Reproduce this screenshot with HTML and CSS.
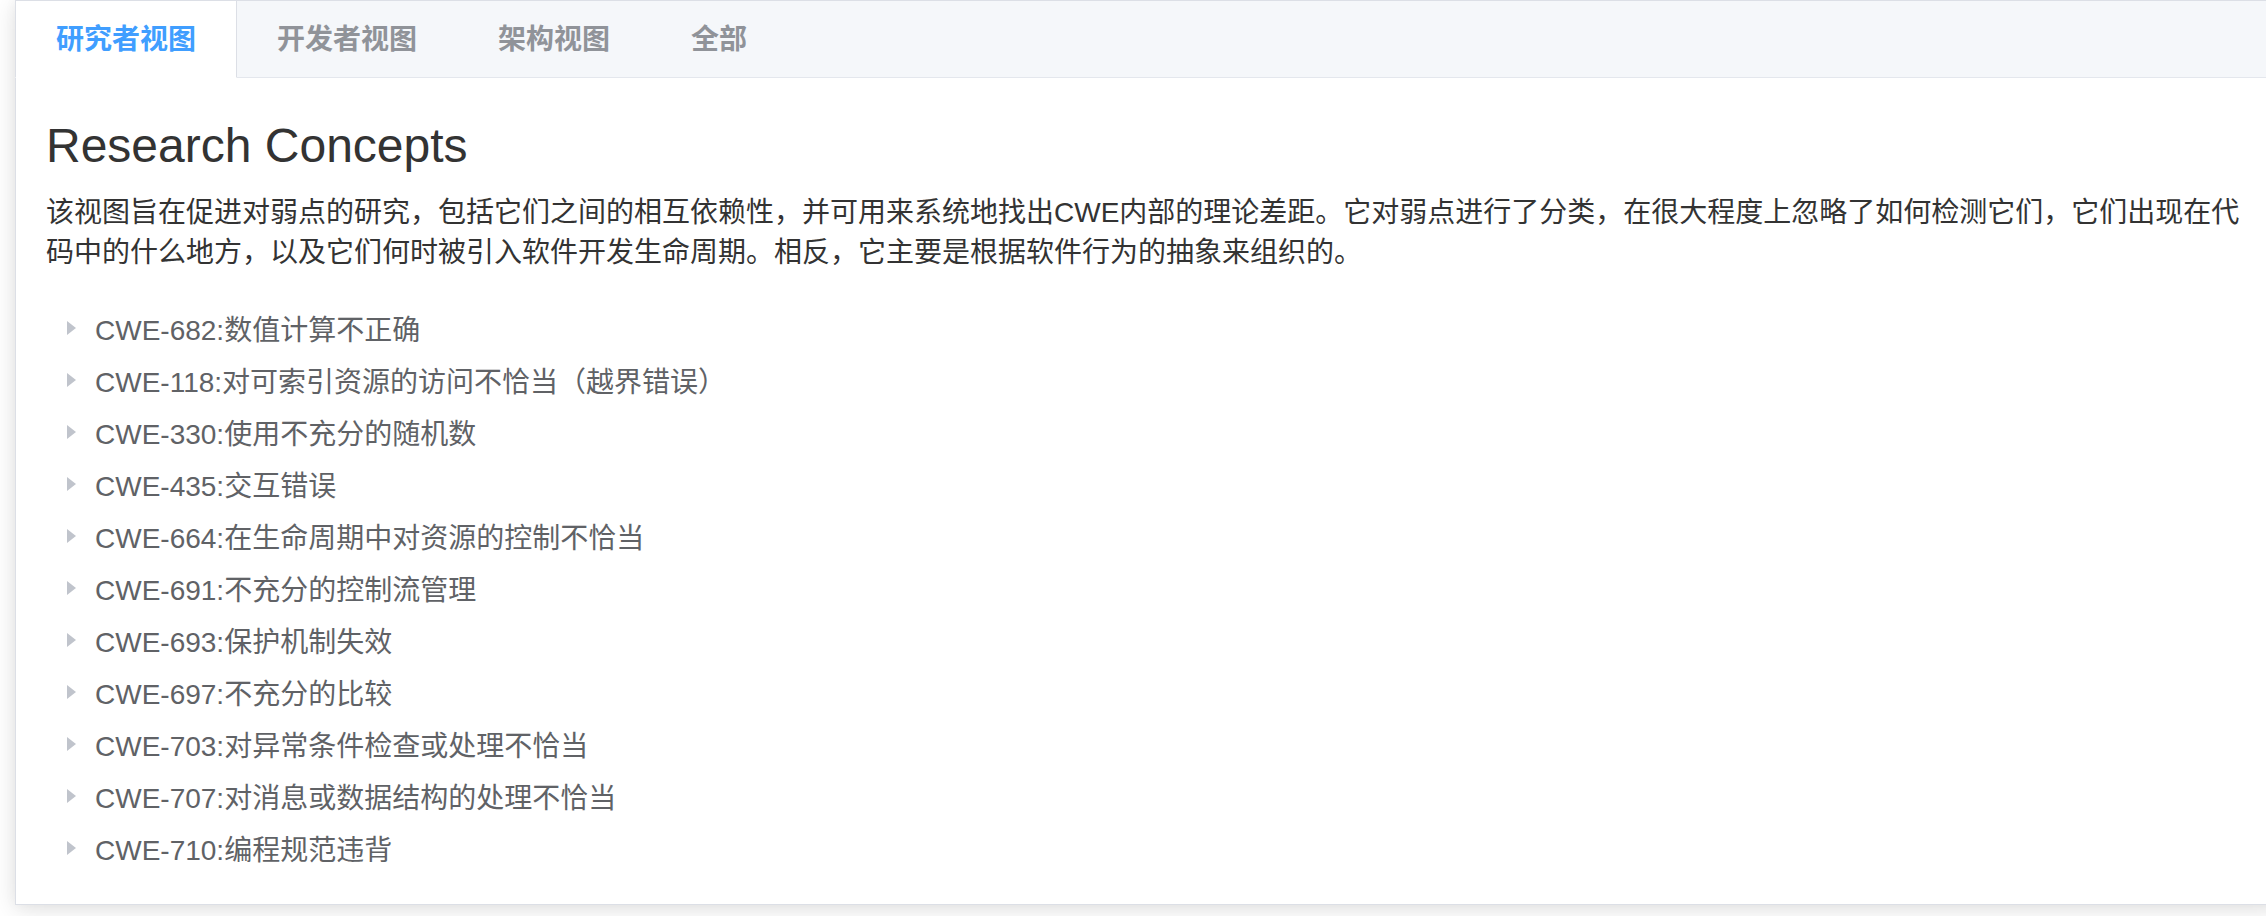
FILE: index.html
```html
<html>
  <head>
    <meta charset="utf-8">
    <title>CWE 视图</title>
    <link rel="stylesheet" href="styles.css">
  </head>
  <body>
    <div class="tabs-card">
      <div class="tabs-header">
        <div class="tab-item active">研究者视图</div>
        <div class="tab-item">开发者视图</div>
        <div class="tab-item">架构视图</div>
        <div class="tab-item">全部</div>
      </div>

      <div class="tabs-content">
        <h3 class="view-title">Research Concepts</h3>
        <p class="view-desc">该视图旨在促进对弱点的研究，包括它们之间的相互依赖性，并可用来系统地找出CWE内部的理论差距。它对弱点进行了分类，在很大程度上忽略了如何检测它们，它们出现在代码中的什么地方，以及它们何时被引入软件开发生命周期。相反，它主要是根据软件行为的抽象来组织的。</p>

        <ul class="tree">
          <li class="tree-node"><span class="caret"></span><span class="node-label">CWE-682:数值计算不正确</span></li>
          <li class="tree-node"><span class="caret"></span><span class="node-label">CWE-118:对可索引资源的访问不恰当（越界错误）</span></li>
          <li class="tree-node"><span class="caret"></span><span class="node-label">CWE-330:使用不充分的随机数</span></li>
          <li class="tree-node"><span class="caret"></span><span class="node-label">CWE-435:交互错误</span></li>
          <li class="tree-node"><span class="caret"></span><span class="node-label">CWE-664:在生命周期中对资源的控制不恰当</span></li>
          <li class="tree-node"><span class="caret"></span><span class="node-label">CWE-691:不充分的控制流管理</span></li>
          <li class="tree-node"><span class="caret"></span><span class="node-label">CWE-693:保护机制失效</span></li>
          <li class="tree-node"><span class="caret"></span><span class="node-label">CWE-697:不充分的比较</span></li>
          <li class="tree-node"><span class="caret"></span><span class="node-label">CWE-703:对异常条件检查或处理不恰当</span></li>
          <li class="tree-node"><span class="caret"></span><span class="node-label">CWE-707:对消息或数据结构的处理不恰当</span></li>
          <li class="tree-node"><span class="caret"></span><span class="node-label">CWE-710:编程规范违背</span></li>
        </ul>
      </div>
    </div>
  </body>
</html>
```

FILE: styles.css
```css
html, body {
  margin: 0;
  overflow: hidden;
  background: #fff;
}
body {
  font-family: "Liberation Sans", "Noto Sans CJK SC", sans-serif;
  color: #333;
}
.tabs-card {
  margin: 0 -16px 0 15px;
  background: #fff;
  border: 1px solid #DCDFE6;
  box-shadow: 0 4px 24px 0 rgba(0, 0, 0, .12), 0 0 12px 0 rgba(0, 0, 0, .04);
}
.tabs-header {
  display: flex;
  align-items: flex-start;
  height: 77px;
  box-sizing: border-box;
  background: #F5F7FA;
  border-bottom: 1px solid #E4E7ED;
}
.tab-item {
  height: 77px;
  margin-bottom: -1px;
  margin-left: -1px;
  padding: 0 40px;
  box-sizing: border-box;
  border: 1px solid transparent;
  border-top: 0;
  line-height: 77px;
  font-size: 28px;
  font-weight: 600;
  color: #909399;
}
.tab-item.active {
  color: #409EFF;
  background: #fff;
  border-left-color: #DCDFE6;
  border-right-color: #DCDFE6;
}
.tabs-content {
  padding: 30px;
}
.view-title {
  margin: 12px 0 20px;
  font-size: 48px;
  font-weight: normal;
  line-height: 1.1;
  color: #333;
}
.view-desc {
  margin: 0 0 29px;
  font-size: 28px;
  line-height: 40px;
  color: #333;
}
.tree {
  list-style: none;
  margin: 0;
  padding: 0;
}
.tree-node {
  display: flex;
  align-items: center;
  height: 52px;
  font-size: 28px;
  color: #606266;
}
.caret {
  width: 0;
  height: 0;
  margin: 0 19px 0 21px;
  border-left: 9px solid #C0C4CC;
  border-top: 7px solid transparent;
  border-bottom: 7px solid transparent;
}
```
